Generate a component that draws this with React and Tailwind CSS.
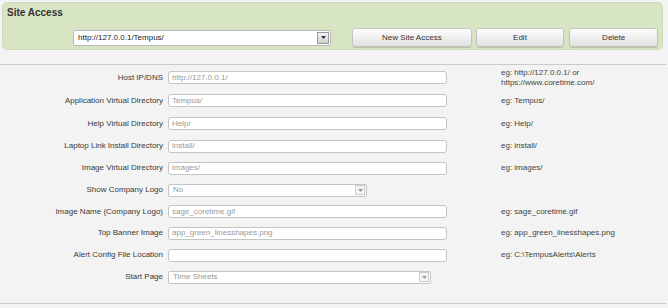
import React from 'react';

const rows = [
  { label: 'Host IP/DNS', value: 'http://127.0.0.1/', hint: ['eg: http://127.0.0.1/ or', 'https://www.coretime.com/'], h: 'h-[23px]' },
  { label: 'Application Virtual Directory', value: 'Tempus/', hint: ['eg: Tempus/'], h: 'h-[23px]' },
  { label: 'Help Virtual Directory', value: 'Help/', hint: ['eg: Help/'], h: 'h-[23px]' },
  { label: 'Laptop Link Install Directory', value: 'install/', hint: ['eg: install/'], h: 'h-[22px]' },
  { label: 'Image Virtual Directory', value: 'images/', hint: ['eg: images/'], h: 'h-[22px]' },
  { label: 'Show Company Logo', value: 'No', select: 'w-[199px]', h: 'h-[22px]' },
  { label: 'Image Name (Company Logo)', value: 'sage_coretime.gif', hint: ['eg: sage_coretime.gif'], h: 'h-[21px]' },
  { label: 'Top Banner Image', value: 'app_green_linesshapes.png', hint: ['eg: app_green_linesshapes.png'], h: 'h-[22px]' },
  { label: 'Alert Config File Location', value: '', hint: ['eg: C:\\TempusAlerts\\Alerts'], h: 'h-[22px]' },
  { label: 'Start Page', value: 'Time Sheets', select: 'w-[263px]', h: 'h-[22px]' },
];

function Arrow({ dark }) {
  return (
    <svg width="5" height="3" viewBox="0 0 5 3">
      <path d="M0 0 L5 0 L2.5 3 z" fill={dark ? '#333' : '#999'} />
    </svg>
  );
}

function Button({ children, className }) {
  return (
    <button className={`h-[19px] rounded-[3px] border border-[#c4c4c4] bg-gradient-to-b from-[#fdfdfd] to-[#e2e2e2] text-[8px] text-[#333] shadow-[0_1px_1px_rgba(0,0,0,0.15)] ${className}`}>
      {children}
    </button>
  );
}

export default function App() {
  return (
    <div className="h-[308px] w-[668px] overflow-hidden bg-[#f3f3f3] font-['Liberation_Sans',Arial,sans-serif]">
      {/* Site Access panel */}
      <div className="mx-[2px] mt-[2px] h-[48px] w-[661px] rounded-[5px] border border-[#cddcb8] bg-[#d8e5c5] px-[4px] pt-[3px]">
        <div className="text-[10px] font-bold leading-[14px] text-[#333]">Site Access</div>
        <div className="mt-[8px] flex items-center">
          <div className="ml-[66px] flex h-[16px] w-[259px] items-center justify-between rounded-[2px] border border-[#b8b8b8] bg-white pl-[4px] pr-[1px]">
            <span className="text-[8px] text-[#222]">http://127.0.0.1/Tempus/</span>
            <div className="flex h-[12px] w-[12px] items-center justify-center border border-[#999] bg-gradient-to-b from-[#f4f4f4] to-[#d0d0d0]">
              <Arrow dark />
            </div>
          </div>
          <Button className="ml-[21px] w-[120px]">New Site Access</Button>
          <Button className="ml-[4px] w-[89px]">Edit</Button>
          <Button className="ml-[5px] w-[89px]">Delete</Button>
        </div>
      </div>

      {/* divider */}
      <div className="mt-[14px] h-px w-[666px] bg-[#c9c9c9]" />

      {/* form rows */}
      <div className="mt-[1px] flex flex-col">
        {rows.map((r) => (
          <div key={r.label} className={`flex items-center ${r.h}`}>
            <div className="w-[163px] text-right text-[8px] text-[#3a3a3a]">{r.label}</div>
            <div className="ml-[5px] w-[333px]">
              {r.select ? (
                <div className={`flex h-[13px] items-center justify-between rounded-[2px] border border-[#c4c4c4] bg-white pl-[4px] pr-[1px] ${r.select}`}>
                  <span className="text-[8px] text-[#999]">{r.value}</span>
                  <div className="flex h-[10px] w-[10px] items-center justify-center border border-[#ccc] bg-[#f6f6f6]">
                    <Arrow />
                  </div>
                </div>
              ) : (
                <div className="flex h-[13px] w-[279px] items-center rounded-[3px] border border-[#c4c4c4] bg-white pl-[3px] text-[8px] text-[#999]">
                  {r.value}
                </div>
              )}
            </div>
            {r.hint && (
              <div className="text-[8px] leading-[10px] text-[#444]">
                {r.hint.map((t) => (
                  <div key={t}>{t}</div>
                ))}
              </div>
            )}
          </div>
        ))}
      </div>

      <div className="mt-[15px] h-px w-[666px] bg-[#c9c9c9]" />
    </div>
  );
}
